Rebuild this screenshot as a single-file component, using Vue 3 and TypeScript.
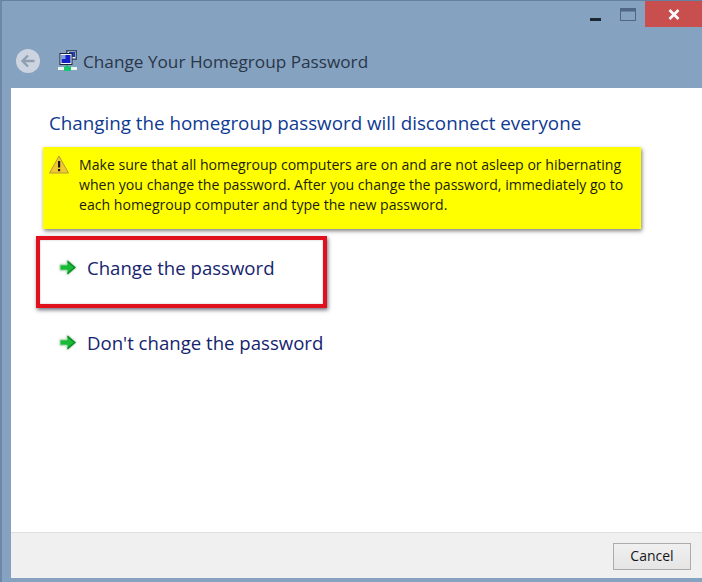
<template>
  <div class="window">
    <div class="caption">
      <svg class="ctl-min" width="11" height="3" viewBox="0 0 11 3"><rect width="11" height="3" fill="#1d2733" /></svg>
      <svg class="ctl-max" width="16" height="13" viewBox="0 0 16 13">
        <rect x="0.5" y="0.5" width="15" height="12" fill="none" stroke="#4f6784" />
        <rect x="0" y="0" width="16" height="3.5" fill="#4f6784" />
      </svg>
      <div class="ctl-close">
        <svg width="12" height="11" viewBox="0 0 12 11">
          <path d="M1.5 1 L10.5 10 M10.5 1 L1.5 10" stroke="#fff" stroke-width="2.6" fill="none" />
        </svg>
      </div>
    </div>

    <div class="nav">
      <div class="back">
        <svg width="16" height="14" viewBox="0 0 16 14">
          <path d="M14.5 7 H3 M8 1.5 L2.5 7 L8 12.5" stroke="#8f9fb2" stroke-width="2.4" fill="none" />
        </svg>
      </div>
      <svg class="hg-icon" width="20" height="21" viewBox="0 0 20 21">
        <rect x="8" y="0" width="11" height="10" fill="#3d4c6b" />
        <rect x="9.5" y="1.5" width="8" height="7" fill="#eaf0fa" />
        <rect x="11" y="2" width="6" height="5" fill="#1f3fb0" />
        <rect x="2" y="3.5" width="12" height="11" fill="#f4f6fa" stroke="#1e2740" />
        <rect x="3.5" y="5" width="9" height="8" fill="#1322c4" />
        <rect x="3.5" y="5" width="4" height="4" fill="#7e9be6" />
        <rect x="8" y="15" width="2" height="2" fill="#26b36b" />
        <rect x="0" y="17" width="6" height="3" fill="#eaf5ee" />
        <rect x="6" y="16.5" width="7" height="4.5" fill="#19c56f" />
        <rect x="13" y="17" width="6" height="3" fill="#eaf5ee" />
      </svg>
      <span class="nav-title">Change Your Homegroup Password</span>
    </div>

    <div class="body">
      <main class="content">
        <h1 class="heading">Changing the homegroup password will disconnect everyone</h1>

        <div class="warning">
          <svg class="warn-icon" width="20" height="19" viewBox="0 0 20 19">
            <path d="M10 1 L19.5 18 H0.5 Z" fill="#f0c830" stroke="#b29a3c" stroke-width="1" />
            <rect x="9" y="6" width="2.2" height="6.5" fill="#1a1a1a" />
            <rect x="9" y="14" width="2.2" height="2.2" fill="#1a1a1a" />
          </svg>
          <p class="warn-text">
            Make sure that all homegroup computers are on and are not asleep or hibernating<br />
            when you change the password. After you change the password, immediately go to<br />
            each homegroup computer and type the new password.
          </p>
        </div>

        <div v-for="opt in options" :key="opt" class="option">
          <svg width="18" height="17" viewBox="0 0 18 17">
            <path d="M1 5.8 H8 V1 L17 8.5 L8 16 V11.2 H1 Z" fill="#17bb36" stroke="#cfe8d3" stroke-width="0.8" />
            <path d="M8.6 2.4 L15.8 8.5 L8.6 14.6" fill="none" stroke="#0c8a28" stroke-width="1.4" />
          </svg>
          <span>{{ opt }}</span>
        </div>

        <div class="callout"></div>
      </main>

      <footer class="footer">
        <button class="cancel" type="button">Cancel</button>
      </footer>
    </div>
  </div>
</template>

<script setup lang="ts">
const options: string[] = ['Change the password', "Don't change the password"]
</script>

<style>
html,
body {
  margin: 0;
  padding: 0;
}
</style>

<style scoped>
.window {
  box-sizing: border-box;
  width: 702px;
  height: 582px;
  display: flex;
  flex-direction: column;
  background: #85a2c1;
  border-top: 1px solid #6480a3;
  border-left: 2px solid #6d88aa;
  font-family: "Open Sans", "Noto Sans", sans-serif;
  overflow: hidden;
}

/* Barra de titulo */
.caption {
  height: 27px;
  display: flex;
  align-items: flex-start;
  justify-content: flex-end;
}

.ctl-min {
  margin: 17px 19px 0 0;
}

.ctl-max {
  margin: 7px 9px 0 0;
}

.ctl-close {
  width: 57px;
  height: 26px;
  background: #c94f4f;
  display: flex;
  align-items: center;
  justify-content: center;
}

.nav {
  height: 60px;
  display: flex;
  align-items: center;
  padding: 6px 0 0 14px;
  box-sizing: border-box;
}

.back {
  width: 24px;
  height: 24px;
  border-radius: 50%;
  background: #ccd4df;
  display: flex;
  align-items: center;
  justify-content: center;
}

.hg-icon {
  margin-left: 18px;
  margin-top: -1px;
}

.nav-title {
  margin-left: 5px;
  font-size: 17.2px;
  color: #2a3648;
}

.body {
  flex: 1;
  margin-left: 9px;
  display: flex;
  flex-direction: column;
  background: #fff;
  margin-bottom: 4px;
  min-height: 0;
}

.content {
  flex: 1;
  position: relative;
  padding: 21px 0 0 38px;
}

.heading {
  margin: 0;
  font-size: 18.8px;
  line-height: 28px;
  font-weight: 400;
  color: #0f3a92;
  white-space: nowrap;
}

.warning {
  box-sizing: border-box;
  width: 598px;
  height: 82px;
  margin: 10px 0 0 -6px;
  padding: 8px 0 0 6px;
  display: flex;
  gap: 10px;
  background: #ffff00;
  box-shadow: 1px 2px 4px rgba(60, 60, 60, 0.65);
}

.warn-icon {
  flex: none;
}

.warn-text {
  margin: 0;
  font-size: 14.1px;
  line-height: 20px;
  color: #1c1c10;
  white-space: nowrap;
}

.option {
  display: flex;
  align-items: center;
  gap: 10px;
  height: 30px;
  padding-left: 10px;
  font-size: 18.6px;
  color: #16246e;
}

.warning + .option {
  margin-top: 23px;
}

.option + .option {
  margin-top: 45px;
}

.option svg {
  flex: none;
  filter: drop-shadow(0 0 1px rgba(60, 90, 60, 0.35));
}

/* Marca vermelha por cima do conteudo */
.callout {
  position: absolute;
  left: 25px;
  top: 148px;
  width: 283px;
  height: 64px;
  border: 4px solid #e0101c;
  box-shadow: 1px 2px 4px rgba(50, 50, 70, 0.7), inset 0 0 2px rgba(90, 90, 110, 0.4);
}

.footer {
  height: 46px;
  display: flex;
  align-items: center;
  justify-content: flex-end;
  box-sizing: border-box;
  padding: 2px 11px 0 0;
  background: #f0f0f0;
  border-top: 1px solid #dfdfdf;
}

.cancel {
  box-sizing: border-box;
  width: 78px;
  height: 27px;
  padding: 0 0 2px;
  border: 1px solid #acacac;
  background: linear-gradient(#f0f0f0, #e5e5e5);
  font-family: inherit;
  font-size: 14px;
  color: #16161a;
}
</style>
